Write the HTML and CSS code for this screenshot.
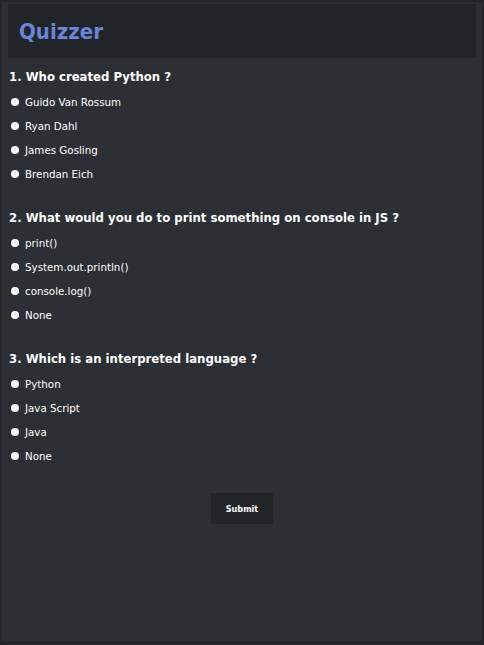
FILE: index.html
```html
<!DOCTYPE html>
<html lang="en">
<head>
<meta charset="utf-8">
<title>Quizzer</title>
<link rel="stylesheet" href="styles.css">
</head>
<body>
<div class="app">
  <header class="top">
    <h1 class="brand">Quizzer</h1>
  </header>
  <form class="quiz">
    <section class="question">
      <h2 class="q-title">1. Who created Python ?</h2>
      <ul class="options">
        <li><label class="opt"><input type="radio" name="q1" class="radio"><span>Guido Van Rossum</span></label></li>
        <li><label class="opt"><input type="radio" name="q1" class="radio"><span>Ryan Dahl</span></label></li>
        <li><label class="opt"><input type="radio" name="q1" class="radio"><span>James Gosling</span></label></li>
        <li><label class="opt"><input type="radio" name="q1" class="radio"><span>Brendan Eich</span></label></li>
      </ul>
    </section>
    <section class="question">
      <h2 class="q-title">2. What would you do to print something on console in JS ?</h2>
      <ul class="options">
        <li><label class="opt"><input type="radio" name="q2" class="radio"><span>print()</span></label></li>
        <li><label class="opt"><input type="radio" name="q2" class="radio"><span>System.out.println()</span></label></li>
        <li><label class="opt"><input type="radio" name="q2" class="radio"><span>console.log()</span></label></li>
        <li><label class="opt"><input type="radio" name="q2" class="radio"><span>None</span></label></li>
      </ul>
    </section>
    <section class="question">
      <h2 class="q-title">3. Which is an interpreted language ?</h2>
      <ul class="options">
        <li><label class="opt"><input type="radio" name="q3" class="radio"><span>Python</span></label></li>
        <li><label class="opt"><input type="radio" name="q3" class="radio"><span>Java Script</span></label></li>
        <li><label class="opt"><input type="radio" name="q3" class="radio"><span>Java</span></label></li>
        <li><label class="opt"><input type="radio" name="q3" class="radio"><span>None</span></label></li>
      </ul>
    </section>
    <div class="actions">
      <button type="button" class="submit">Submit</button>
    </div>
  </form>
</div>
</body>
</html>
```
FILE: styles.css
```css
* { box-sizing: border-box; }
html, body { margin: 0; padding: 0; }
body {
  background: #232425;
  font-family: "DejaVu Sans", Verdana, sans-serif;
  color: #ffffff;
  width: 484px;
  height: 645px;
  overflow: hidden;
}
.app {
  margin: 2px;
  width: 480px;
  height: 639px;
  background: #2c2f34;
  padding: 2px 6px 0 6px;
}
.top {
  height: 54px;
  background: #222528;
  padding-left: 11px;
  padding-top: 1px;
  display: flex;
  align-items: center;
}
.brand {
  margin: 0;
  font-family: "DejaVu Sans Condensed", "DejaVu Sans", sans-serif;
  font-size: 22px;
  font-weight: bold;
  color: #6a84d9;
  line-height: 1;
}
.quiz {
  padding-top: 9px;
}
.question {
  margin-bottom: 22px;
  padding-left: 1px;
}
.q-title {
  margin: 0 0 3px 0;
  font-family: "DejaVu Sans Condensed", "DejaVu Sans", sans-serif;
  font-size: 13px;
  font-weight: bold;
  line-height: 20px;
  color: #ffffff;
}
.options {
  list-style: none;
  margin: 0;
  padding: 0;
}
.options li { height: 24px; }
.opt {
  display: flex;
  align-items: center;
  height: 24px;
  font-size: 10.3px;
  color: #ffffff;
}
.radio {
  appearance: none;
  -webkit-appearance: none;
  width: 8px;
  height: 8px;
  border-radius: 50%;
  background: #ffffff;
  margin: 0 6px 0 2px;
  border: none;
}
.actions {
  display: flex;
  justify-content: center;
  padding-top: 3px;
}
.submit {
  width: 62px;
  height: 31px;
  background: #222528;
  color: #ffffff;
  border: none;
  font-family: "DejaVu Sans Condensed", "DejaVu Sans", sans-serif;
  font-size: 9px;
  font-weight: bold;
  padding: 0;
}
```
